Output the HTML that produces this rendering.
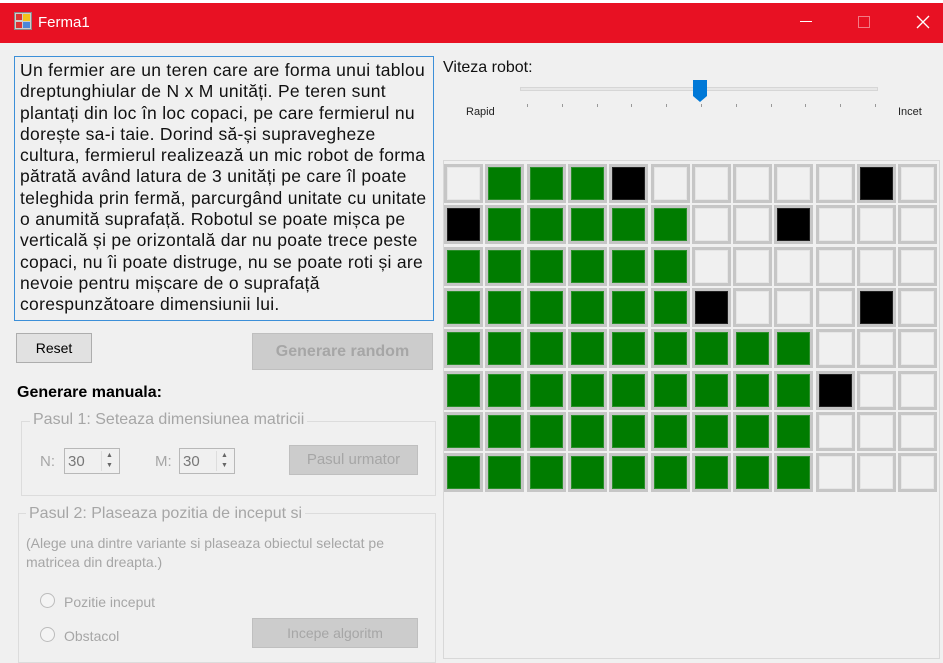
<!DOCTYPE html>
<html><head><meta charset="utf-8"><style>
*{margin:0;padding:0;box-sizing:border-box}
body{width:943px;height:663px;background:#f0f0f0;font-family:"Liberation Sans",sans-serif;position:relative;overflow:hidden}
.a{position:absolute}
#top{left:0;top:0;width:943px;height:3px;background:#fff}
#tb{left:0;top:3px;width:943px;height:40px;background:#e81123;color:#fff}
#tb .t{left:38px;top:11px;font-size:15px}
#txt{left:14px;top:56px;width:420px;height:265px;border:1px solid #3c8fd8;background:#f0f0f0;padding:3px 0 0 5px;font-size:17.5px;line-height:21.3px;letter-spacing:0.3px;color:#111;white-space:nowrap}
#txt div{height:21.3px}
.btn{border:1px solid #adadad;background:#e1e1e1;text-align:center;font-size:14px}
.dis{color:#a6a6a6;background:#cccccc;border-color:#bfbfbf}
.gray{color:#a6a6a6}
.grp{border:1px solid #dcdcdc}
.spin{border:1px solid #b8b8b8;background:#f0f0f0;width:56px;height:26px;font-size:15px;color:#777;padding:4px 0 0 3px}
.spin i{position:absolute;right:2px;top:2px;width:16px;height:20px;border-left:1px solid #ddd;font-style:normal;font-size:7px;line-height:10px;text-align:center;color:#666}
.rad{width:15px;height:15px;border:1px solid #bcbcbc;border-radius:50%;background:#f4f4f4}
#panel{left:443px;top:160px;width:497px;height:499px;border:1px solid #d8d8d8}
.c{position:absolute;width:39px;height:39px;background:#c6c6c6;padding:3px}
.c div{width:100%;height:100%;border:1px solid #dadada}
.W div{background:#f0f0f0;border-color:#e6e6e6}
.G div{background:#007c00;border-color:#2a8f2a}
.B div{background:#000;border-color:#222}
</style></head><body>
<div class="a" id="top"></div>
<div class="a" id="tb">
<svg class="a" style="left:14px;top:9px" width="18" height="18" viewBox="0 0 18 18"><rect x="0.5" y="0.5" width="17" height="17" fill="#ccc" stroke="#888"/><rect x="2" y="2" width="6" height="6" fill="#d33"/><rect x="9" y="2" width="7" height="7" fill="#f3c21a"/><rect x="2" y="10" width="6" height="6" fill="#d33"/><rect x="9" y="10" width="7" height="6" fill="#4a86d8"/></svg>
<div class="a t">Ferma1</div>
<div class="a" style="left:800px;top:18px;width:12px;height:1px;background:#fff"></div>
<div class="a" style="left:858px;top:13px;width:12px;height:12px;border:1px solid #f27a84"></div>
<svg class="a" style="left:916px;top:12px" width="14" height="14"><path d="M1 1L13 13M13 1L1 13" stroke="#fff" stroke-width="1.3"/></svg>
</div>
<div class="a" id="txt"><div>Un fermier are un teren care are forma unui tablou</div><div>dreptunghiular de N x M unități. Pe teren sunt</div><div>plantați din loc în loc copaci, pe care fermierul nu</div><div>dorește sa-i taie. Dorind să-și supravegheze</div><div>cultura, fermierul realizează un mic robot de forma</div><div>pătrată având latura de 3 unități pe care îl poate</div><div>teleghida prin fermă, parcurgând unitate cu unitate</div><div>o anumită suprafață. Robotul se poate mișca pe</div><div>verticală și pe orizontală dar nu poate trece peste</div><div>copaci, nu îi poate distruge, nu se poate roti și are</div><div>nevoie pentru mișcare de o suprafață</div><div>corespunzătoare dimensiunii lui.</div></div>

<div class="a btn" style="left:16px;top:333px;width:76px;height:30px;line-height:28px;color:#000">Reset</div>
<div class="a btn dis" style="left:252px;top:333px;width:181px;height:37px;line-height:35px;font-size:16px;font-weight:bold">Generare random</div>
<div class="a" style="left:17px;top:384px;font-size:16px;font-weight:bold;color:#000">Generare manuala:</div>

<div class="a grp" style="left:21px;top:421px;width:415px;height:75px"></div>
<div class="a gray" style="left:30px;top:411px;font-size:16px;background:#f0f0f0;padding:0 3px">Pasul 1: Seteaza dimensiunea matricii</div>
<div class="a gray" style="left:40px;top:453px;font-size:15px">N:</div>
<div class="a spin" style="left:64px;top:448px">30<i>▲<br>▼</i></div>
<div class="a gray" style="left:155px;top:453px;font-size:15px">M:</div>
<div class="a spin" style="left:179px;top:448px">30<i>▲<br>▼</i></div>
<div class="a btn dis" style="left:289px;top:445px;width:129px;height:30px;line-height:28px;font-size:15px;font-weight:normal">Pasul urmator</div>

<div class="a grp" style="left:18px;top:513px;width:418px;height:150px"></div>
<div class="a gray" style="left:26px;top:505px;font-size:16px;background:#f0f0f0;padding:0 3px">Pasul 2: Plaseaza pozitia de inceput si</div>
<div class="a gray" style="left:26px;top:534px;font-size:14px;line-height:19px">(Alege una dintre variante si plaseaza obiectul selectat pe<br>matricea din dreapta.)</div>
<div class="a rad" style="left:40px;top:593px"></div>
<div class="a gray" style="left:64px;top:594px;font-size:14px">Pozitie inceput</div>
<div class="a rad" style="left:40px;top:627px"></div>
<div class="a gray" style="left:64px;top:628px;font-size:14px">Obstacol</div>
<div class="a btn dis" style="left:252px;top:618px;width:166px;height:30px;line-height:28px;font-size:14px;font-weight:normal">Incepe algoritm</div>

<div class="a" style="left:443px;top:59px;font-size:16px;color:#111">Viteza robot:</div>
<div class="a" style="left:520px;top:87px;width:358px;height:4px;background:#e7e7e7;border:1px solid #d6d6d6"></div>
<svg class="a" style="left:692px;top:79px" width="16" height="24"><path d="M1 1H15V17L8 23L1 17Z" fill="#0078d7"/></svg>
<div id="ticks"></div>
<div class="a" style="left:466px;top:106px;font-size:11px;color:#222">Rapid</div>
<div class="a" style="left:898px;top:106px;font-size:11px;color:#222">Incet</div>

<div class="a" id="panel"></div>
<div id="g"></div>
<script>
var rows=["WGGGBWWWWWBW","BGGGGGWWBWWW","GGGGGGWWWWWW","GGGGGGBWWWBW","GGGGGGGGGWWW","GGGGGGGGGBWW","GGGGGGGGGWWW","GGGGGGGGGWWW"];
var h="";
for(var r=0;r<8;r++)for(var c=0;c<12;c++){h+='<div class="c '+rows[r][c]+'" style="left:'+Math.round(444+c*41.3)+'px;top:'+Math.round(164+r*41.3)+'px"><div></div></div>';}
document.getElementById("g").innerHTML=h;
var t="";for(var i=0;i<11;i++){t+='<div class="a" style="left:'+Math.round(527+i*34.8)+'px;top:104px;width:1px;height:3px;background:#999"></div>';}
document.getElementById("ticks").innerHTML=t;
</script>
</body></html>
